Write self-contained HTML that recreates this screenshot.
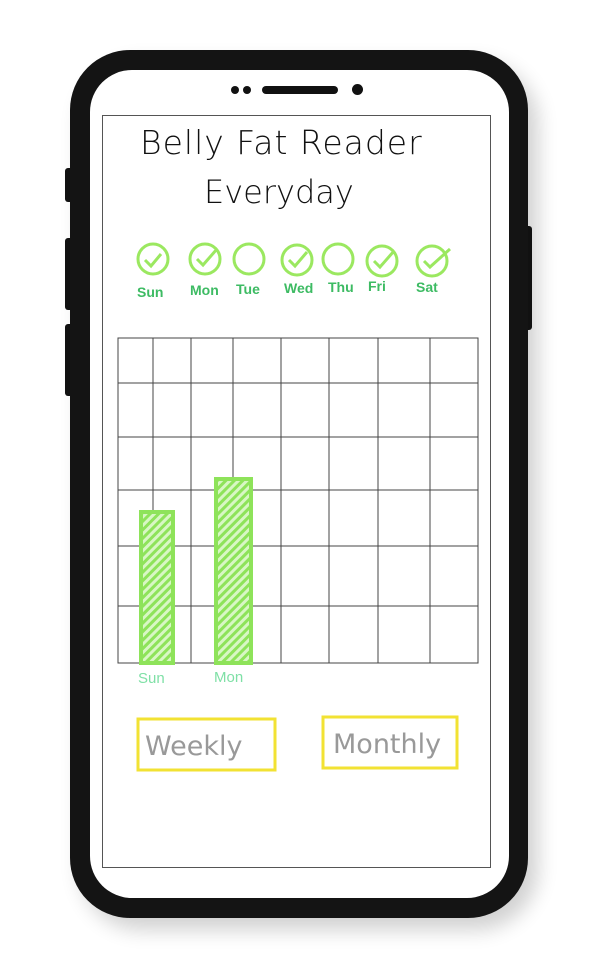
<!DOCTYPE html><html><head><style>
body{margin:0;width:595px;height:979px;background:#fff;position:relative;overflow:hidden;font-family:"Liberation Sans",sans-serif}
.a{position:absolute}
</style></head><body>
<div class="a" style="left:80px;top:62px;width:458px;height:868px;border-radius:62px;background:#000;opacity:.18;filter:blur(10px)"></div>
<div class="a" style="left:65px;top:168px;width:8px;height:34px;background:#111;border-radius:3px"></div>
<div class="a" style="left:65px;top:238px;width:8px;height:72px;background:#111;border-radius:3px"></div>
<div class="a" style="left:65px;top:324px;width:8px;height:72px;background:#111;border-radius:3px"></div>
<div class="a" style="left:524px;top:226px;width:8px;height:104px;background:#111;border-radius:3px"></div>
<div class="a" style="left:70px;top:50px;width:458px;height:868px;border-radius:60px;background:#141414"></div>
<div class="a" style="left:90px;top:70px;width:419px;height:828px;border-radius:42px;background:#fff"></div>
<div class="a" style="left:231px;top:86px;width:8px;height:8px;border-radius:50%;background:#111"></div>
<div class="a" style="left:243px;top:86px;width:8px;height:8px;border-radius:50%;background:#111"></div>
<div class="a" style="left:262px;top:86px;width:76px;height:8px;border-radius:4px;background:#111"></div>
<div class="a" style="left:352px;top:84px;width:11px;height:11px;border-radius:50%;background:#111"></div>
<div class="a" style="left:102px;top:115px;width:387px;height:751px;border:1.5px solid #555"></div>
<div class="a" style="left:140px;top:123px;font-size:33px;color:#111;letter-spacing:1px;font-family:'DejaVu Sans',sans-serif;font-weight:300">Belly Fat Reader</div>
<div class="a" style="left:204px;top:173px;font-size:32px;color:#111;font-family:'DejaVu Sans',sans-serif;font-weight:300">Everyday</div>
<svg class="a" style="left:0;top:0" width="595" height="979">
<g fill="none" stroke="#9be860" stroke-width="3">
<circle cx="153" cy="259" r="15"/><circle cx="205" cy="259" r="15"/><circle cx="249" cy="259" r="15"/><circle cx="297" cy="260" r="15"/><circle cx="338" cy="259" r="15"/><circle cx="382" cy="261" r="15"/><circle cx="432" cy="261" r="15"/>
<path d="M145 260l6 6 10-12M197 259l6 6 14-16M289 260l6 6 12-14M374 261l6 6 14-16M424 261l6 6 20-18"/>
</g>
<g font-size="14" font-weight="bold" fill="#3dbb63" font-family="Liberation Sans">
<text x="137" y="297">Sun</text><text x="190" y="295">Mon</text><text x="236" y="294">Tue</text><text x="284" y="293">Wed</text><text x="328" y="292">Thu</text><text x="368" y="291">Fri</text><text x="416" y="292">Sat</text>
</g>
<g stroke="#444" stroke-width="1" fill="none">
<rect x="118" y="338" width="360" height="325"/>
<path d="M153 338V663M191 338V663M233 338V663M281 338V663M329 338V663M378 338V663M430 338V663M118 383H478M118 437H478M118 490H478M118 546H478M118 606H478"/>
</g>
<defs><pattern id="h" width="6" height="6" patternUnits="userSpaceOnUse" patternTransform="rotate(45)"><rect width="6" height="6" fill="#d8f7c4"/><rect width="3" height="6" fill="#8ee35a"/></pattern></defs>
<rect x="141" y="512" width="32" height="151" fill="url(#h)" stroke="#8ee35a" stroke-width="4"/>
<rect x="216" y="479" width="35" height="184" fill="url(#h)" stroke="#8ee35a" stroke-width="4"/>
<g font-size="15" fill="#7fe0a6" font-family="Liberation Sans"><text x="138" y="683">Sun</text><text x="214" y="682">Mon</text></g>
<rect x="138" y="719" width="137" height="51" fill="none" stroke="#f2e233" stroke-width="3"/>
<rect x="323" y="717" width="134" height="51" fill="none" stroke="#f2e233" stroke-width="3"/>
<g font-size="27" fill="#999" font-family="DejaVu Sans"><text x="145" y="755">Weekly</text><text x="333" y="753">Monthly</text></g>
</svg>
</body></html>
